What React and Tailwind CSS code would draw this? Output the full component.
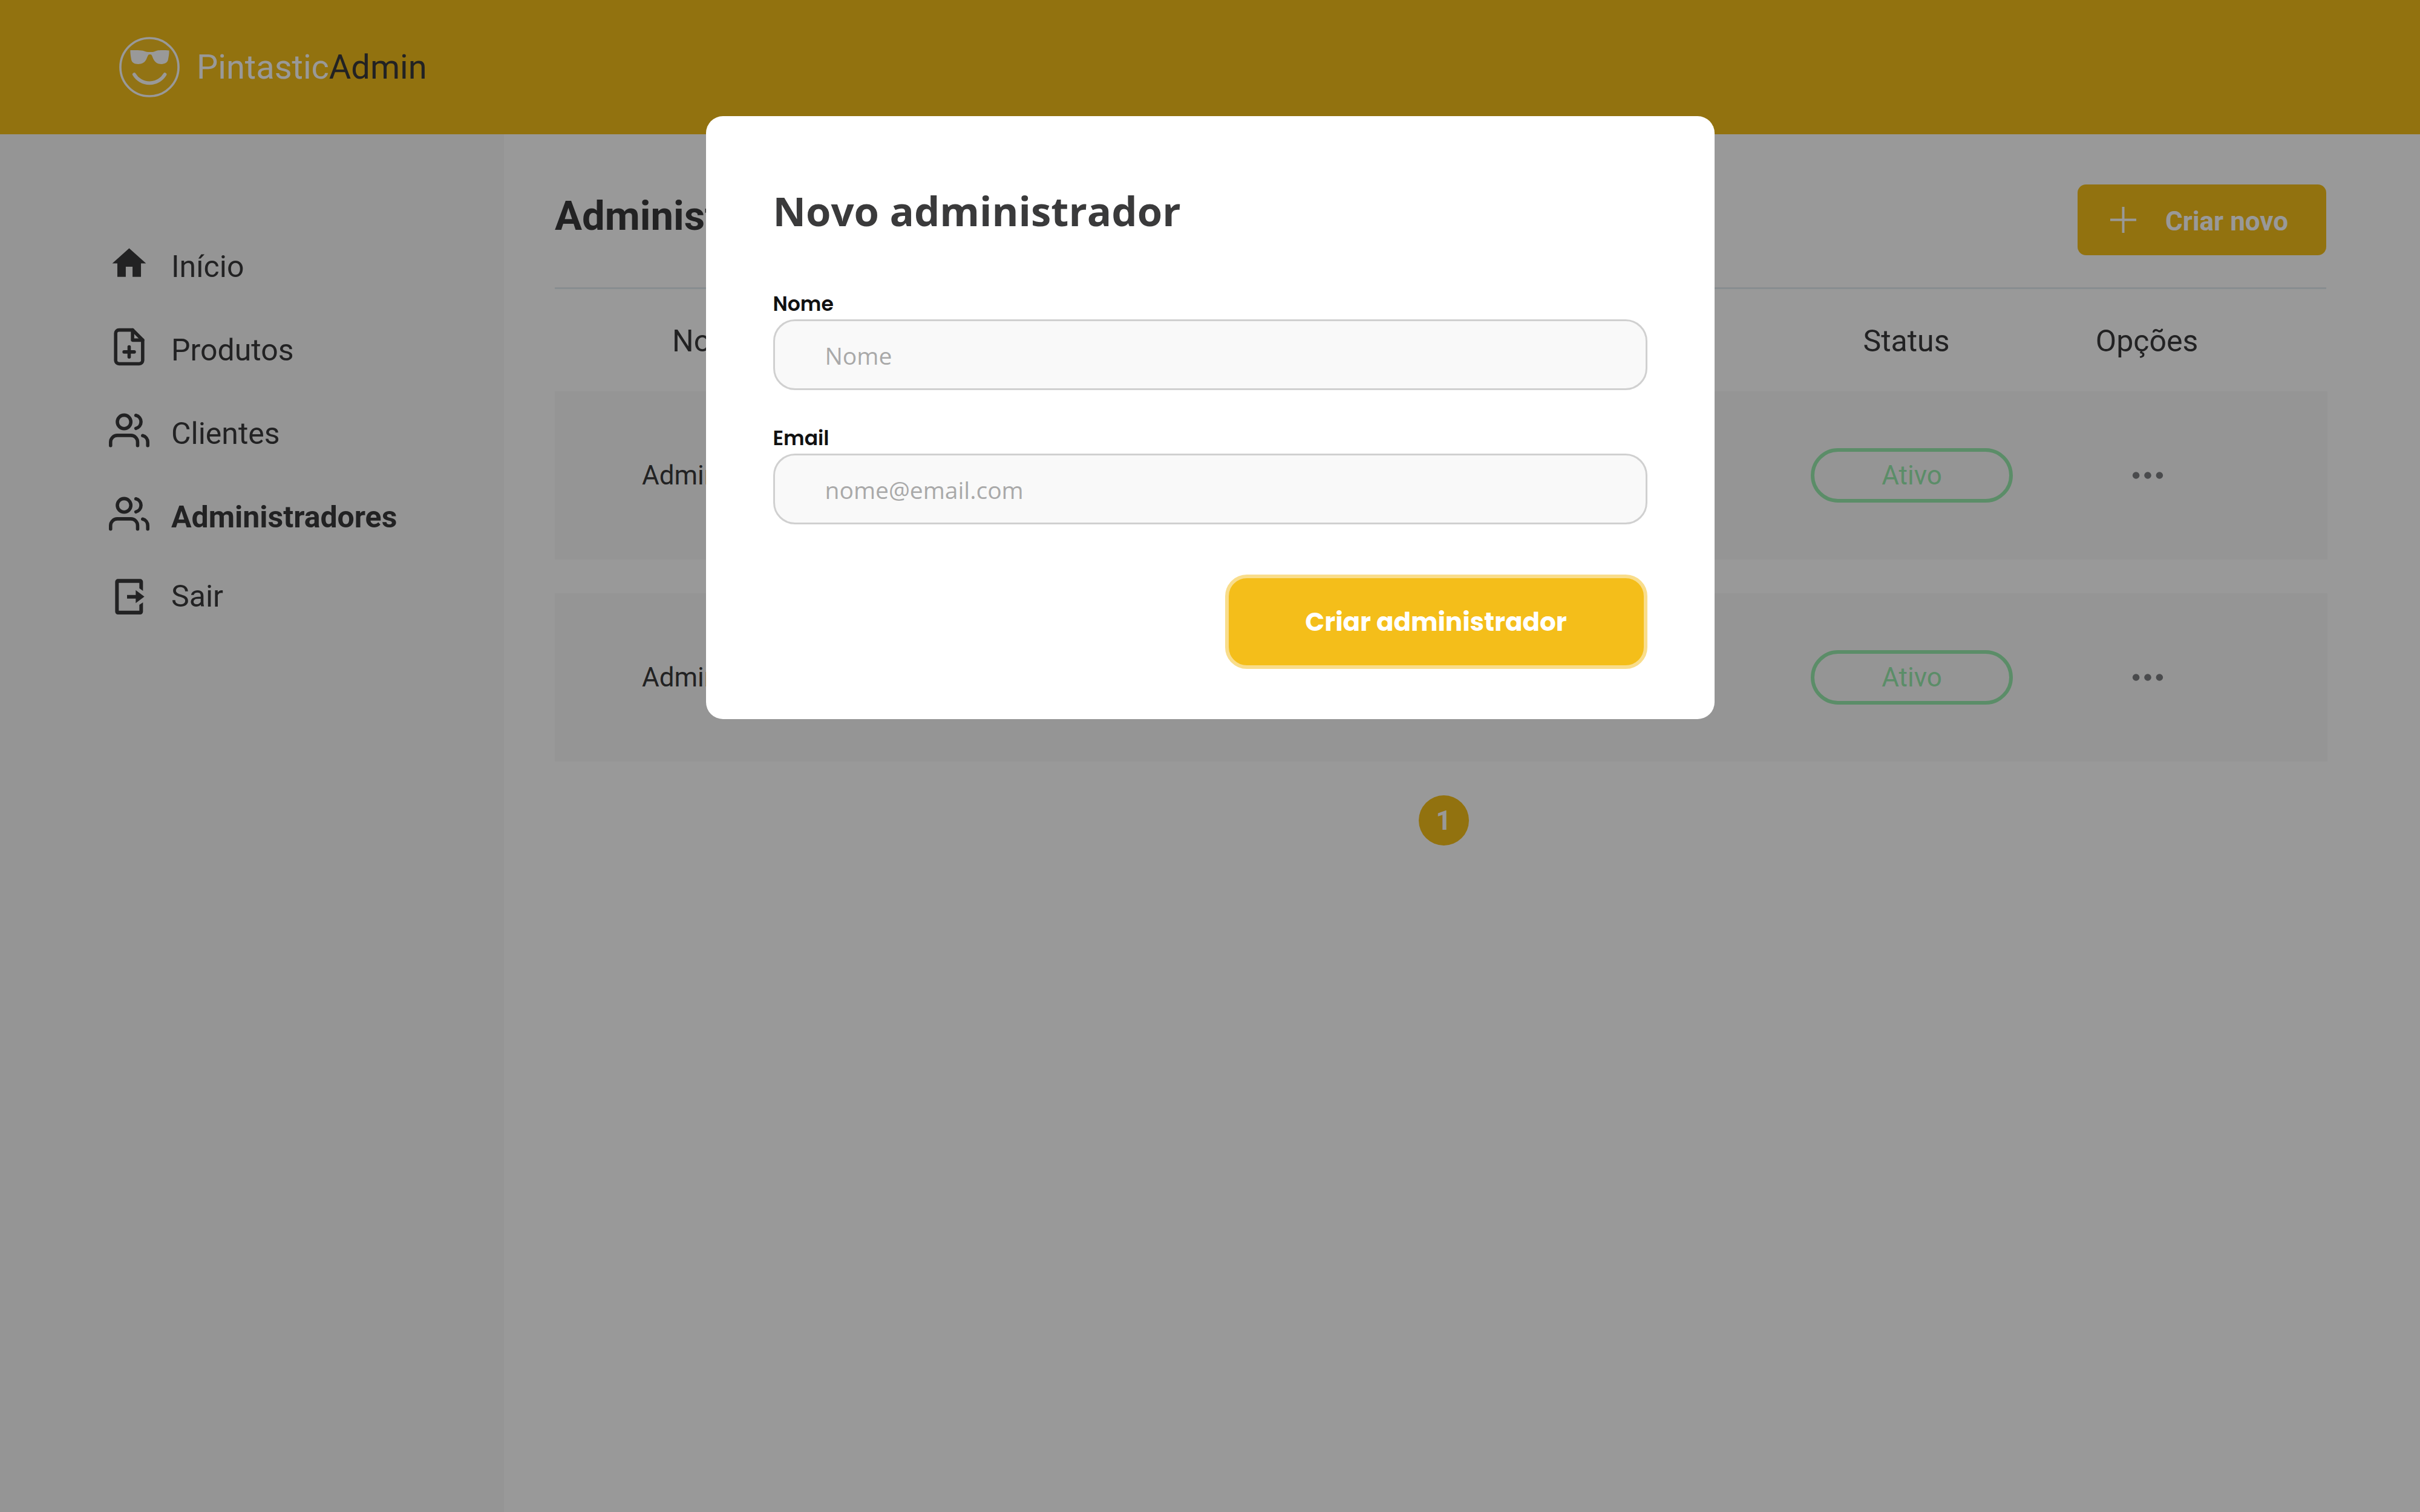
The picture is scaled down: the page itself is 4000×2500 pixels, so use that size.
import { FiFilePlus, FiUsers } from "react-icons/fi";
import { MdHome } from "react-icons/md";
import { BsThreeDots } from "react-icons/bs";

function LogoutIcon({ className }) {
  return (
    <svg viewBox="32 37 201 201" className={className} fill="currentColor" aria-hidden="true">
      <path d="M77 50H187a14 14 0 0 1 14 14V109L183 96V69H81V207H183V178L201 166V212a14 14 0 0 1-14 14H77a14 14 0 0 1-14-14V64a14 14 0 0 1 14-14z" />
      <path d="M122 129h43V105l43 32.500-43 32.500V147h-43z" />
    </svg>
  );
}

function Logo({ className }) {
  return (
    <svg viewBox="14 14 303 303" className={className} aria-hidden="true">
      <circle cx="165.500" cy="165.500" r="145.500" fill="#fff" fillOpacity="0.04" stroke="#fff" strokeWidth="11" />
      <path
        d="M70 81C95 80 118 80 132 83C143 86 149 90 158 90H177C186 90 192 86 203 83C217 80 240 81 264 82C265 96 262 112 259 128C256 144 243 150 226 150C207 150 196 143 188 130C182 120 180 110 176 104C174 101 162 101 160 104C156 110 153 120 148 130C140 144 127 150 109 150C90 150 79 144 75 130C72 112 69 96 70 81Z"
        fill="#fff"
      />
      <path d="M89 202A90 90 0 0 0 243 202" fill="none" stroke="#fff" strokeWidth="17" strokeLinecap="round" />
    </svg>
  );
}

const navItems = [
  { label: "Início", Icon: MdHome },
  { label: "Produtos", Icon: FiFilePlus },
  { label: "Clientes", Icon: FiUsers },
  { label: "Administradores", Icon: FiUsers, active: true },
];

const admins = [
  { id: 1, name: "Administrador", status: "Ativo" },
  { id: 2, name: "Administrador", status: "Ativo" },
];

function Header() {
  return (
    <header className="flex h-[222px] items-center gap-7 bg-[#f4be1a] px-[197px]">
      <Logo className="size-[100px]" />
      <p className="text-[56px] leading-[64px] text-white">
        Pintastic<span className="text-[#3a3a3b]">Admin</span>
      </p>
    </header>
  );
}

function Sidebar() {
  return (
    <aside className="w-[833px] shrink-0 bg-[#f9f9f9] px-[180px] pt-[184px]">
      <nav className="text-[50px] leading-[70px]">
        <ul className="flex flex-col gap-[68px]">
          {navItems.map(({ label, Icon, active }) => (
            <li key={label}>
              <a href="#" className="flex h-[70px] items-center gap-9">
                <span className="pb-3">
                  <Icon className="size-[67px]" />
                </span>
                <span className={active ? "font-bold" : ""}>{label}</span>
              </a>
            </li>
          ))}
        </ul>
        <button type="button" className="mt-[61px] flex h-[70px] items-center gap-9">
          <LogoutIcon className="size-[67px]" />
          Sair
        </button>
      </nav>
    </aside>
  );
}

function AdminTable() {
  return (
    <table className="w-full table-fixed border-separate border-spacing-0">
      <colgroup>
        <col />
        <col className="w-[420px]" />
        <col className="w-[477px]" />
      </colgroup>
      <thead>
        <tr className="h-[169px] text-[50px]">
          <th className="pt-1 pl-[194px] text-left font-normal">Nome</th>
          <th className="pt-1 pr-[18px] text-center font-normal">Status</th>
          <th className="pt-1 pr-[120px] text-center font-normal">Opções</th>
        </tr>
      </thead>
      {admins.map((admin) => (
        <tbody key={admin.id} className="text-[44px]">
          <tr className="h-[278px] bg-[#f9f9f9]">
            <td className="pl-[144px]">{admin.name}</td>
            <td>
              <span className="mx-auto flex h-[90px] w-[334px] items-center justify-center rounded-full border-6 border-[#98ebae] text-[#98ebae]">
                {admin.status}
              </span>
            </td>
            <td className="pr-[118px]">
              <button type="button" aria-label="Opções" className="mx-auto block text-[#7c7e80]">
                <BsThreeDots className="size-[62px]" />
              </button>
            </td>
          </tr>
          <tr className="h-14" />
        </tbody>
      ))}
    </table>
  );
}

function Field({ id, label, ...props }) {
  return (
    <div className="flex flex-col">
      <label htmlFor={id} className="font-['Poppins',Inter,sans-serif] text-[33px] leading-[50px] font-semibold text-[#111]">
        {label}
      </label>
      <input
        id={id}
        className="h-[117px] rounded-[36px] border-3 border-[#d0d0d0] bg-[#f9f9f9] px-[83px] pt-0.5 text-[39px] outline-none placeholder:text-[#a9a9a9]"
        {...props}
      />
    </div>
  );
}

function NewAdminModal() {
  return (
    <div className="fixed inset-0 bg-black/40">
      <form
        role="dialog"
        aria-labelledby="modal-title"
        className="mx-auto mt-[192px] flex w-[1667px] max-w-full flex-col rounded-[28px] bg-white px-[111px] pt-[108px] pb-[83px] font-['Open_Sans',sans-serif]"
      >
        <h2 id="modal-title" className="text-[67px] leading-[96px] font-bold">
          Novo administrador
        </h2>
        <div className="mt-[82px] flex flex-col gap-[55px]">
          <Field id="name" label="Nome" type="text" placeholder="Nome" />
          <Field id="email" label="Email" type="email" placeholder="nome@email.com" />
        </div>
        <button
          type="button"
          className="mt-[83px] h-[156px] w-[698px] self-end rounded-[36px] border-6 border-[#f9dd8b] bg-[#f4be1a] font-['Poppins',Inter,sans-serif] text-[42px] font-bold text-white"
        >
          Criar administrador
        </button>
      </form>
    </div>
  );
}

export default function App() {
  return (
    <div className="flex min-h-screen flex-col bg-white font-[Roboto,sans-serif] text-[#3a3a3b]">
      <Header />
      <div className="flex grow">
        <Sidebar />
        <main className="min-w-0 grow pt-[83px] pr-[153px] pl-[84px]">
          <div className="mr-0.5 flex h-[173px] items-start justify-between border-b-3 border-[#e3ebf0]">
            <h1 className="text-[67px] leading-[104px] font-bold">Administradores</h1>
            <button
              type="button"
              className="flex h-[117px] w-[411px] items-center rounded-[14px] bg-[#f4be1a] pl-[54px] text-[44px] font-bold text-white"
            >
              <svg viewBox="0 0 43 43" className="mr-12 size-[43px]" stroke="currentColor" strokeWidth="4" aria-hidden="true">
                <path d="M21.5 0v43M0 21.500h43" />
              </svg>
              <span className="pt-1">Criar novo</span>
            </button>
          </div>
          <AdminTable />
          <div className="flex justify-center pl-2">
            <button type="button" className="size-[83px] rounded-full bg-[#f4be1a] text-[44px] font-bold text-white">
              1
            </button>
          </div>
        </main>
      </div>
      <NewAdminModal />
    </div>
  );
}
